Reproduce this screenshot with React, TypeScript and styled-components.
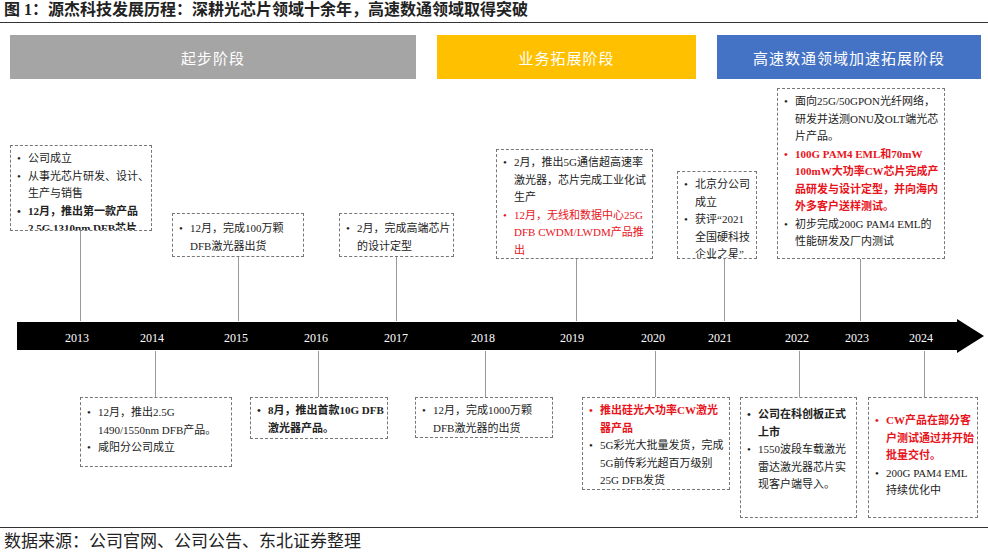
import React from 'react';
import styled, { createGlobalStyle } from 'styled-components';

const Global = createGlobalStyle`
  body { margin: 0; background: #fff; font-family: "Liberation Serif", "Noto Sans CJK SC", serif; color: #222; }
`;

const Page = styled.div`
  width: 988px;
  height: 558px;
  display: flex;
  flex-direction: column;
`;

const Title = styled.div`
  height: 22px;
  font-size: 16px;
  font-weight: bold;
  line-height: 20px;
  padding-left: 4px;
  border-bottom: 1.5px solid #333;
`;

const PhaseRow = styled.div`
  display: flex;
  padding: 12px 7px 0 10px;
  gap: 21px;
`;

const Phase = styled.div<{ $w: number; $bg: string }>`
  width: ${p => p.$w}px;
  height: 44px;
  background: ${p => p.$bg};
  color: #fff;
  font-size: 15px;
  display: flex;
  align-items: center;
  justify-content: center;
  letter-spacing: 1px;
`;

const Canvas = styled.div`
  position: relative;
  flex: 1;
`;

const Box = styled.div<{ $x: number; $y: number; $w: number; $h: number; $pt?: number }>`
  position: absolute;
  left: ${p => p.$x}px;
  top: ${p => p.$y}px;
  width: ${p => p.$w}px;
  height: ${p => p.$h}px;
  box-sizing: border-box;
  border: 1px dashed #777;
  padding: ${p => p.$pt ?? 4}px 2px 0 5px;
  font-size: 11px;
  line-height: 17.5px;
  background: #fff;
  overflow: hidden;
`;

const Item = styled.div<{ $red?: boolean; $bold?: boolean }>`
  position: relative;
  padding-left: 12px;
  color: ${p => (p.$red ? '#e8141c' : '#222')};
  font-weight: ${p => (p.$bold ? 'bold' : 'normal')};
  &::before {
    content: '•';
    position: absolute;
    left: 1px;
  }
`;

const VLine = styled.div<{ $x: number; $y1: number; $y2: number }>`
  position: absolute;
  left: ${p => p.$x}px;
  top: ${p => p.$y1}px;
  height: ${p => p.$y2 - p.$y1}px;
  border-left: 1px solid #999;
`;

const Arrow = styled.div`
  position: absolute;
  left: 17px;
  top: 240px;
  width: 967px;
  height: 34px;
`;

const Year = styled.div<{ $x: number }>`
  position: absolute;
  left: ${p => p.$x - 20}px;
  width: 40px;
  top: 252px;
  text-align: center;
  color: #fff;
  font-size: 12px;
`;

const Footer = styled.div`
  height: 30px;
  border-top: 1.5px solid #333;
  font-size: 17px;
  line-height: 28px;
  padding-left: 4px;
`;

const years: [number, string][] = [
  [77, '2013'], [152, '2014'], [236, '2015'], [316, '2016'], [396, '2017'], [483, '2018'],
  [572, '2019'], [653, '2020'], [720, '2021'], [797, '2022'], [857, '2023'], [921, '2024'],
];

// canvas starts at y=79 of the page
const up: [number, number][] = [[80, 151], [238, 177], [396, 177], [576, 179], [724, 179], [860, 179]];
const down: [number, number][] = [[155, 318], [318, 318], [485, 318], [655, 318], [799, 318], [924, 318]];

export default function App() {
  return (
    <Page>
      <Global />
      <Title>图 1：源杰科技发展历程：深耕光芯片领域十余年，高速数通领域取得突破</Title>
      <PhaseRow>
        <Phase $w={406} $bg="#a5a5a5">起步阶段</Phase>
        <Phase $w={259} $bg="#ffc000">业务拓展阶段</Phase>
        <Phase $w={264} $bg="#4472c4">高速数通领域加速拓展阶段</Phase>
      </PhaseRow>
      <Canvas>
        {up.map(([x, y]) => <VLine key={'u' + x} $x={x} $y1={y} $y2={242} />)}
        {down.map(([x, y]) => <VLine key={'d' + x} $x={x} $y1={272} $y2={y} />)}

        <Box $x={10} $y={66} $w={142} $h={86}>
          <Item>公司成立</Item>
          <Item>从事光芯片研发、设计、生产与销售</Item>
          <Item $bold>12月，推出第一款产品 2.5G 1310nm DFB芯片</Item>
        </Box>
        <Box $x={172} $y={134} $w={132} $h={44} $pt={6}>
          <Item>12月，完成100万颗DFB激光器出货</Item>
        </Box>
        <Box $x={339} $y={134} $w={115} $h={44} $pt={6}>
          <Item>2月，完成高端芯片的设计定型</Item>
        </Box>
        <Box $x={496} $y={70} $w={157} $h={110}>
          <Item>2月，推出5G通信超高速率激光器，芯片完成工业化试生产</Item>
          <Item $red>12月，无线和数据中心25G DFB CWDM/LWDM产品推出</Item>
        </Box>
        <Box $x={677} $y={92} $w={80} $h={88}>
          <Item>北京分公司成立</Item>
          <Item>获评“2021全国硬科技企业之星”</Item>
        </Box>
        <Box $x={777} $y={9} $w={168} $h={171}>
          <Item>面向25G/50GPON光纤网络，研发并送测ONU及OLT端光芯片产品。</Item>
          <Item $red $bold>100G PAM4 EML和70mW 100mW大功率CW芯片完成产品研发与设计定型，并向海内外多客户送样测试。</Item>
          <Item>初步完成200G PAM4 EML的性能研发及厂内测试</Item>
        </Box>

        <Arrow>
          <svg width="967" height="34" viewBox="0 0 967 34">
            <polygon points="0,3 940,3 940,0 967,17 940,34 940,31 0,31" fill="#000" />
          </svg>
        </Arrow>
        {years.map(([x, y]) => (
          <Year key={y} $x={x}>{y}</Year>
        ))}

        <Box $x={80} $y={318} $w={152} $h={70} $pt={6}>
          <Item>12月，推出2.5G 1490/1550nm DFB产品。</Item>
          <Item>咸阳分公司成立</Item>
        </Box>
        <Box $x={250} $y={318} $w={138} $h={42}>
          <Item $bold>8月，推出首款10G DFB激光器产品。</Item>
        </Box>
        <Box $x={415} $y={318} $w={138} $h={41}>
          <Item>12月，完成1000万颗DFB激光器的出货</Item>
        </Box>
        <Box $x={582} $y={318} $w={148} $h={93}>
          <Item $red $bold>推出硅光大功率CW激光器产品</Item>
          <Item>5G彩光大批量发货，完成5G前传彩光超百万级别25G DFB发货</Item>
        </Box>
        <Box $x={740} $y={318} $w={117} $h={121} $pt={8}>
          <Item $bold>公司在科创板正式上市</Item>
          <Item>1550波段车载激光雷达激光器芯片实现客户端导入。</Item>
        </Box>
        <Box $x={868} $y={318} $w={110} $h={121} $pt={14}>
          <Item $red $bold>CW产品在部分客户测试通过并开始批量交付。</Item>
          <Item>200G PAM4 EML持续优化中</Item>
        </Box>
      </Canvas>
      <Footer>数据来源：公司官网、公司公告、东北证券整理</Footer>
    </Page>
  );
}
